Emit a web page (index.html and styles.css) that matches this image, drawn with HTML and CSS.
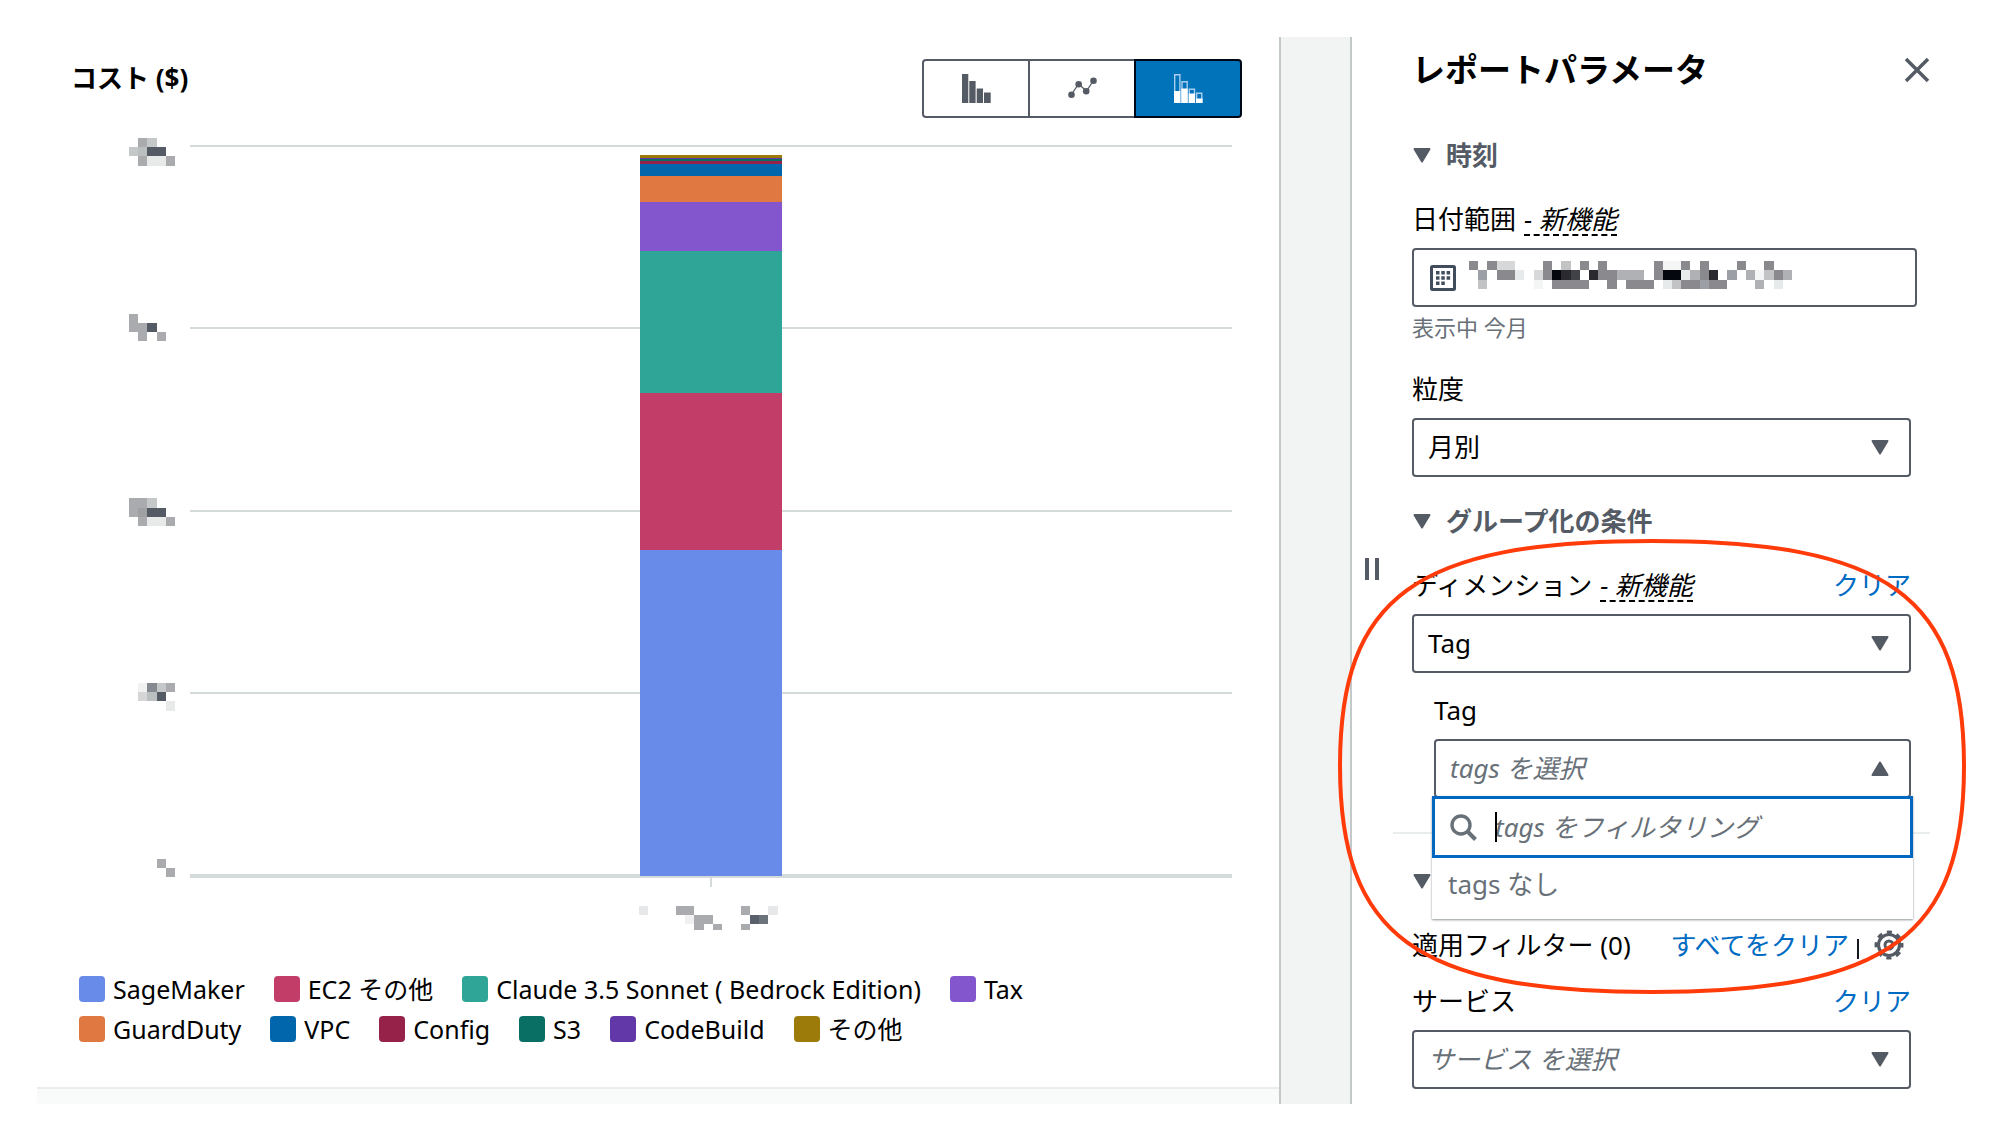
FILE: index.html
```html
<!DOCTYPE html>
<html lang="ja">
<head>
<meta charset="utf-8">
<title>コストレポート</title>
<link rel="stylesheet" href="styles.css">
</head>
<body>
<svg class="defs" aria-hidden="true">
  <symbol id="caret" viewBox="0 0 18 15"><path d="M1.500 1h15L9 13.500z" fill="currentColor" stroke="currentColor" stroke-width="2" stroke-linejoin="round"/></symbol>
</svg>
<div class="workspace">
  <main class="report">
    <header class="report-head">
      <h1 class="chart-title">コスト ($)</h1>
      <div class="chart-types" role="group" aria-label="グラフの種類">
        <button type="button" class="chart-type" aria-label="棒グラフ">
          <svg width="29" height="29" viewBox="0 0 29 29" fill="currentColor"><path d="M0 0h6.300v29H0zM7.300 7h6.300v22H7.300zM14.700 14.500H21V29h-6.300zM22 18.500h6.700V29H22z"/></svg>
        </button>
        <button type="button" class="chart-type" aria-label="折れ線グラフ">
          <svg width="29" height="29" viewBox="0 0 29 29" fill="currentColor"><path d="M3.500 20.500l7-10.500 8 7L25.500 6.500" fill="none" stroke="currentColor" stroke-width="1.300"/><circle cx="3.500" cy="20.800" r="3.300"/><circle cx="10.700" cy="10.300" r="3.300"/><circle cx="18.200" cy="17.300" r="3.300"/><circle cx="25.500" cy="6.700" r="3.300"/></svg>
        </button>
        <button type="button" class="chart-type selected" aria-label="積み上げ棒グラフ" aria-pressed="true">
          <svg width="29" height="29" viewBox="0 0 29 29"><path d="M.7.7h5.200v27.600H.7zM8 7.700h5.200v20.600H8zM15.300 15.200h5.200v13.100h-5.200zM22.600 19.200h5.200v9.100h-5.200z" fill="none" stroke="#a9cdee" stroke-width="1.400"/><path d="M0 17h6.300v12H0zM7.300 14.500h6.300V29H7.300zM14.700 19.500H21V29h-6.300zM22 24.500h6.500V29H22z" fill="#fff"/></svg>
        </button>
      </div>
    </header>

    <figure class="chart">
      <svg class="y-labels" viewBox="0 0 5 80" preserveAspectRatio="none" shape-rendering="crispEdges" aria-hidden="true">
        <g fill="#a9abaf"><path d="M1 0h1v1H1zM1 2h1v1H1zM4 2h1v1H4zM0 19h1v1h1v2H1v-1H0zM3 21h1v1H3zM0 39h2v1H1v1H0zM1 41h1v1H1zM4 41h1v1H4zM4 59h1v1H4zM3 78h1v1H3zM4 79h1v1H4z"/></g>
        <path fill="#c4c8c8" d="M2 0h1v1H2zM0 1h1v1H0zM2 39h1v1H2zM3 59h1v1H3z"/>
        <path fill="#bbbfc0" d="M1 1h1v1H1zM2 60h1v1H2z"/>
        <path fill="#9da1a2" d="M1 40h1v1H1z"/>
        <path fill="#848a90" d="M2 59h1v1H2z"/>
        <path fill="#545b64" d="M2 1h2v1H2zM2 20h1v1H2zM2 40h2v1H2zM3 60h1v1H3z"/>
        <path fill="#e8eaea" d="M2 2h2v1H2zM2 41h2v1H2zM4 61h1v1H4z"/>
        <path fill="#d5d5d8" d="M1 60h1v1H1z"/>
        <path fill="#f0f2f2" d="M1 59h1v1H1z"/>
      </svg>
      <div class="plot">
        <div class="gridlines"><i></i><i></i><i></i><i></i></div>
        <div class="bar">
          <span class="c-other" style="flex-grow:3"></span>
          <span class="c-codebuild" style="flex-grow:1"></span>
          <span class="c-s3" style="flex-grow:2"></span>
          <span class="c-config" style="flex-grow:3"></span>
          <span class="c-vpc" style="flex-grow:12"></span>
          <span class="c-guardduty" style="flex-grow:26"></span>
          <span class="c-tax" style="flex-grow:49"></span>
          <span class="c-claude" style="flex-grow:142"></span>
          <span class="c-ec2" style="flex-grow:157"></span>
          <span class="c-sagemaker" style="flex-grow:326"></span>
        </div>
      </div>
      <div class="x-axis">
        <span class="tick"></span>
        <svg class="x-label" viewBox="0 0 15.700 2.600" preserveAspectRatio="none" shape-rendering="crispEdges" aria-hidden="true">
          <path fill="#e6e8e9" d="M0 0h1v1H0zM14 0h1v1h-1z"/>
          <path fill="#a9abaf" d="M4 0h2v1H4zM11 0h1v1h-1zM6 1h2v1H7v.6H6zM8 2h1v.6H8zM11 2h1v.6h-1z"/>
          <path fill="#f0f0f1" d="M5 1h1v1H5z"/>
          <path fill="#59606b" d="M12 1h1v1h-1z"/>
          <path fill="#6d737a" d="M13 1h1v1h-1z"/>
        </svg>
      </div>
    </figure>

    <ul class="legend">
      <li><span class="swatch c-sagemaker"></span>SageMaker</li>
      <li><span class="swatch c-ec2"></span>EC2 その他</li>
      <li><span class="swatch c-claude"></span>Claude 3.5 Sonnet ( Bedrock Edition)</li>
      <li><span class="swatch c-tax"></span>Tax</li>
      <li><span class="swatch c-guardduty"></span>GuardDuty</li>
      <li><span class="swatch c-vpc"></span>VPC</li>
      <li><span class="swatch c-config"></span>Config</li>
      <li><span class="swatch c-s3"></span>S3</li>
      <li><span class="swatch c-codebuild"></span>CodeBuild</li>
      <li><span class="swatch c-other"></span>その他</li>
    </ul>
    <div class="report-foot"></div>
  </main>

  <div class="gutter"></div>

  <aside class="params">
    <span class="resize-handle" aria-hidden="true"></span>
    <header class="params-head">
      <h2 class="params-title">レポートパラメータ</h2>
      <button type="button" class="icon-button" aria-label="閉じる">
        <svg width="26" height="26" viewBox="0 0 26 26"><path d="M2 2l22 22M24 2L2 24" stroke="currentColor" stroke-width="3.500" fill="none"/></svg>
      </button>
    </header>

    <section class="group">
      <button type="button" class="group-head" aria-expanded="true"><svg class="caret"><use href="#caret"/></svg>時刻</button>
      <div class="field">
        <div class="field-label"><label for="range">日付範囲</label><em class="new">- 新機能</em></div>
        <button type="button" id="range" class="box date-range">
          <svg width="26" height="26" viewBox="0 0 26 26"><rect x="1.500" y="1.500" width="23" height="23" rx="1" fill="none" stroke="currentColor" stroke-width="3"/><path fill="currentColor" d="M6 6h3.500v3.500H6zM11.300 6h3.500v3.500h-3.500zM16.600 6h3.500v3.500h-3.500zM6 11.300h3.500v3.500H6zM11.300 11.300h3.500v3.500h-3.500zM16.600 11.300h3.500v3.500h-3.500zM6 16.600h3.500v3.500H6zM11.300 16.600h3.500v3.500h-3.500z"/></svg>
          <svg class="range-value" viewBox="0 0 35 3" preserveAspectRatio="none" shape-rendering="crispEdges" aria-hidden="true">
            <path fill="#8a8a8e" d="M0 0h1v1H0zM2 0h1v1H2zM8 0h1v2H8zM12 0h1v1h-1zM14 0h1v1h1v2h-1v-1h-1zM20 0h1v2h-1zM23 0h1v1h-1zM25 0h1v2h-1zM29 0h1v1h-1zM32 0h1v1h-1zM3 1h2v1H3zM33 1h1v1h-1zM9 2h4v1H9zM17 2h3v1h-3zM23 2h2v1h-2zM26 2h2v1h-2z"/>
            <path fill="#9c9fa5" d="M1 1h1v1H1zM28 1h1v1h-1zM25 2h1v1h-1z"/>
            <path fill="#b0b1b4" d="M16 1h3v1h-3zM24 1h1v1h-1zM30 1h1v1h-1zM34 1h1v1h-1zM31 2h1v1h-1z"/>
            <path fill="#c1c3c5" d="M10 0h1v1h-1zM32 1h1v1h-1zM1 2h1v1H1zM22 2h1v1h-1z"/>
            <path fill="#d7d8da" d="M3 0h2v1H3zM7 1h1v1H7z"/>
            <path fill="#e7eaea" d="M5 1h1v1H5zM23 1h1v1h-1zM21 2h1v1h-1zM33 2h1v1h-1z"/>
            <path fill="#f4f6f6" d="M21 0h2v1h-2zM31 1h1v1h-1zM7 2h1v1H7z"/>
            <path fill="#05070f" d="M9 1h1v1H9zM21 1h2v1h-2z"/>
            <path fill="#29292f" d="M10 1h1v1h-1zM13 1h1v1h-1zM26 1h1v1h-1z"/>
            <path fill="#414148" d="M11 1h1v1h-1z"/>
          </svg>
        </button>
        <p class="hint">表示中 今月</p>
      </div>
      <div class="field">
        <div class="field-label"><label for="grain">粒度</label></div>
        <div class="select"><select id="grain" class="box"><option>月別</option></select><svg class="caret"><use href="#caret"/></svg></div>
      </div>
    </section>

    <section class="group group-by">
      <button type="button" class="group-head" aria-expanded="true"><svg class="caret"><use href="#caret"/></svg>グループ化の条件</button>
      <div class="field">
        <div class="field-label"><label for="dimension">ディメンション</label><em class="new">- 新機能</em><a class="link" href="#clear-dimension">クリア</a></div>
        <div class="select"><select id="dimension" class="box"><option>Tag</option></select><svg class="caret"><use href="#caret"/></svg></div>
      </div>
      <div class="field nested">
        <div class="field-label"><label for="tag">Tag</label></div>
        <div class="select"><select id="tag" class="box placeholder"><option>tags を選択</option></select><svg class="caret up"><use href="#caret"/></svg></div>
        <div class="menu">
          <div class="search">
            <svg width="27" height="27" viewBox="0 0 27 27"><circle cx="11" cy="11" r="9" fill="none" stroke="currentColor" stroke-width="3.400"/><path d="M17.500 17.500l8 8" stroke="currentColor" stroke-width="4"/></svg>
            <span class="text-cursor"></span>
            <input type="text" class="search-input" placeholder="tags をフィルタリング" aria-label="tags をフィルタリング">
          </div>
          <p class="menu-empty">tags なし</p>
        </div>
      </div>
      <svg class="annotation" viewBox="0 0 628 456" preserveAspectRatio="none" aria-hidden="true"><path d="M2 227C2 58 77 2 314 2S626 58 626 227 551 453 314 453 2 396 2 227z"/></svg>
    </section>

    <section class="group filters">
      <button type="button" class="group-head" aria-expanded="true" aria-label="セクションを閉じる"><svg class="caret"><use href="#caret"/></svg></button>
      <div class="applied">
        <span>適用フィルター (0)</span>
        <a class="link" href="#clear-all">すべてをクリア</a>
        <span class="bar-sep"></span>
        <button type="button" class="icon-button" aria-label="設定">
          <svg width="30" height="30" viewBox="0 0 30 30" fill="none" stroke="currentColor"><circle cx="15" cy="15" r="10.500" stroke-width="3.200"/><circle cx="15" cy="15" r="13" stroke-width="3" stroke-dasharray="5.200 5.010" stroke-dashoffset="2.600"/><circle cx="15" cy="15" r="4" stroke-width="3"/></svg>
        </button>
      </div>
      <div class="field service">
        <div class="field-label"><label for="service">サービス</label><a class="link" href="#clear-service">クリア</a></div>
        <div class="select"><select id="service" class="box placeholder"><option>サービス を選択</option></select><svg class="caret"><use href="#caret"/></svg></div>
      </div>
    </section>
  </aside>
</div>
</body>
</html>
```
FILE: styles.css
```css
* { box-sizing: border-box; }

body {
  margin: 0;
  background: #fff;
  color: #000;
  font: 26px/30px "Noto Sans", "Noto Sans CJK JP", sans-serif;
}

h1, h2, p, ul, figure { margin: 0; padding: 0; }
button, input, select { font: inherit; color: inherit; }
svg { display: block; flex: none; }
.defs { position: absolute; width: 0; height: 0; }

.workspace {
  display: grid;
  grid-template-columns: minmax(0, 1fr) 73px minmax(0, 611px);
  padding: 37px;
}

/* Report */
.report { display: flex; flex-direction: column; }
.report-head {
  display: flex;
  justify-content: space-between;
  align-items: flex-start;
  padding: 22px 37px 0 34px;
}
.chart-title { font-size: 26px; line-height: 38px; font-weight: 700; }
.chart-types { display: flex; }
.chart-type {
  display: flex;
  align-items: center;
  justify-content: center;
  width: 108px;
  height: 59px;
  padding: 0;
  border: 2px solid #545b64;
  background: #fff;
  color: #545b64;
}
.chart-type + .chart-type { margin-left: -2px; }
.chart-type:first-child { border-radius: 4px 0 0 4px; }
.chart-type:last-child { border-radius: 0 4px 4px 0; }
.chart-type.selected { background: #0073bb; border-color: #000716; }

.chart {
  display: grid;
  grid-template-columns: 61px minmax(0, 1fr);
  padding: 20px 47px 0 92px;
}
.y-labels { width: 46px; height: 739px; }
.plot {
  display: grid;
  margin-top: 7px;
  height: 733px;
}
.gridlines, .bar { grid-area: 1 / 1; display: flex; flex-direction: column; }
.gridlines { border-bottom: 4px solid #d5dbdb; }
.gridlines i { flex: 1; border-top: 2px solid #d5dbdb; }
.bar {
  justify-self: center;
  width: 142px;
  margin: 10px 0 2px;
}
.bar span { flex: 1 1 0; }
.x-axis {
  grid-column: 2;
  display: flex;
  flex-direction: column;
  align-items: center;
  gap: 19px;
}
.tick { width: 2px; height: 9px; background: #d5dbdb; }
.x-label { width: 145px; height: 24px; }

.legend {
  display: flex;
  flex-wrap: wrap;
  gap: 10px 29px;
  max-width: 1080px;
  padding: 44px 0 43px 42px;
  font-size: 25px;
  list-style: none;
}
.legend li { display: flex; align-items: center; gap: 8px; white-space: nowrap; }
.swatch { width: 26px; height: 26px; border-radius: 4px; }

.c-sagemaker { background: #688ae8; }
.c-ec2 { background: #c33d69; }
.c-claude { background: #2ea597; }
.c-tax { background: #8456ce; }
.c-guardduty { background: #e07941; }
.c-vpc { background: #0166ab; }
.c-config { background: #962249; }
.c-s3 { background: #096f64; }
.c-codebuild { background: #6237a7; }
.c-other { background: #9c7b0b; }

.report-foot {
  height: 17px;
  margin-top: auto;
  border-top: 2px solid #eaeded;
  background: #f9fafa;
}

.gutter {
  background: #f2f3f3;
  border: solid #c3c8c9;
  border-width: 0 2px;
}

/* Parameters */
.params { position: relative; padding: 13px 52px 13px 60px; }
.resize-handle {
  position: absolute;
  left: 13px;
  top: 521px;
  width: 14px;
  height: 22px;
  border: solid #545b64;
  border-width: 0 4px;
}
.params-head {
  display: flex;
  justify-content: space-between;
  align-items: center;
  margin: 0 -19px 50px 0;
}
.params-title { font-size: 33px; line-height: 40px; font-weight: 700; }
.icon-button { padding: 0; border: 0; background: none; color: #545b64; }

.group-head {
  display: flex;
  align-items: center;
  gap: 15px;
  height: 30px;
  margin-bottom: 34px;
  padding: 0 0 0 1px;
  border: 0;
  background: none;
  color: #545b64;
  font-weight: 700;
}
.caret { width: 18px; height: 15px; color: #545b64; }
.caret.up { transform: rotate(180deg); }

.field + .field { margin-top: 31px; }
.field-label {
  display: flex;
  gap: 8px;
  height: 32px;
  margin-bottom: 12px;
}
.field-label .link { margin-left: auto; }
.new { border-bottom: 2px dashed #000; }
.link { color: #006bc2; text-decoration: none; }

.box {
  width: 100%;
  height: 59px;
  padding: 0 16px 2px 14px;
  border: 2px solid #545b64;
  border-radius: 4px;
  background: #fff;
  line-height: 40px;
  text-align: left;
  appearance: none;
}
.placeholder { color: #687078; font-style: italic; }
.select { display: grid; align-items: center; }
.select > * { grid-area: 1 / 1; }
.select .caret { justify-self: end; margin-right: 22px; pointer-events: none; }

.date-range {
  display: flex;
  align-items: center;
  gap: 13px;
  width: calc(100% + 6px);
  padding: 0 16px;
  color: #414d5c;
}
.range-value { width: 323px; height: 28px; margin-bottom: 5px; }
.hint { margin-top: 5px; padding-bottom: 1px; font-size: 22px; color: #687078; }

.group-by { position: relative; z-index: 1; margin-top: 29px; }
.nested { position: relative; margin-left: 22px; }
.group-by .nested { margin-top: 22px; }
.menu {
  position: absolute;
  top: 101px;
  left: -2px;
  right: -2px;
  background: #fff;
  box-shadow: 0 1px 2px #8d9499;
}
.search {
  position: relative;
  display: flex;
  align-items: center;
  gap: 18px;
  height: 62px;
  padding: 0 15px;
  border: 3px solid #0068c0;
  color: #687078;
}
.text-cursor {
  position: absolute;
  left: 60px;
  width: 2px;
  height: 30px;
  background: #000;
}
.search-input {
  flex: 1;
  min-width: 0;
  height: 40px;
  padding: 0;
  border: 0;
  outline: 0;
  background: none;
}
.search-input::placeholder { color: #687078; font-style: italic; }
.menu-empty { padding: 11px 16px 20px; color: #687078; }

.annotation {
  position: absolute;
  top: 33px;
  left: -74px;
  width: calc(100% + 129px);
  height: 456px;
  pointer-events: none;
}
.annotation path {
  fill: none;
  stroke: #ff3b0a;
  stroke-width: 4px;
  vector-effect: non-scaling-stroke;
}

.filters { margin-top: 34px; }
.filters::before {
  content: "";
  display: block;
  height: 2px;
  margin: 0 -19px 32px;
  background: #eaeded;
}
.applied { display: flex; align-items: center; height: 30px; }
.applied .link { margin-left: auto; }
.bar-sep { width: 2px; height: 20px; margin: 8px 15px 0 8px; background: #16191f; }
.applied .icon-button { margin-right: 7px; }
.filters .service { margin-top: 26px; }
```
